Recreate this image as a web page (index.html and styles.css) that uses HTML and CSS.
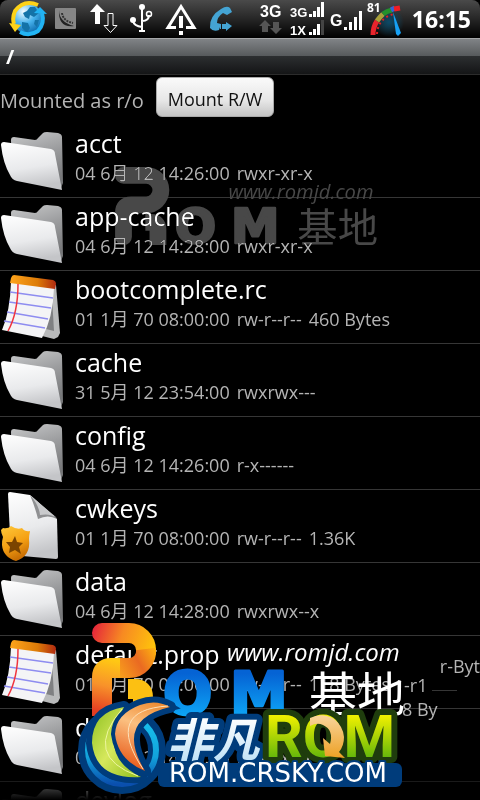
FILE: index.html
```html
<!DOCTYPE html>
<html lang="zh">

<head>
    <meta charset="UTF-8">
    <meta name="viewport" content="width=device-width, initial-scale=1.0">
    <title>/</title>
    <link rel="stylesheet" href="styles.css">
</head>

<body>
    <!-- icons used by the list rows -->
    <svg class="defs" width="0" height="0">
        <defs>
            <linearGradient id="front" x1="0" y1="0" x2="0.2" y2="1">
                <stop offset="0" stop-color="#fff"/>
                <stop offset="0.6" stop-color="#e9eaec"/>
                <stop offset="1" stop-color="#c4c5c8"/>
            </linearGradient>
            <linearGradient id="back" x1="0" y1="0" x2="0.3" y2="1">
                <stop offset="0" stop-color="#c9cacb"/>
                <stop offset="0.5" stop-color="#9c9d9f"/>
                <stop offset="1" stop-color="#77787a"/>
            </linearGradient>
            <linearGradient id="binding" x1="0" y1="0" x2="1" y2="0">
                <stop offset="0" stop-color="#ffa51c"/>
                <stop offset="0.6" stop-color="#dc7b08"/>
                <stop offset="1" stop-color="#b02a10"/>
            </linearGradient>
            <linearGradient id="gold" x1="0" y1="0" x2="0.4" y2="1">
                <stop offset="0" stop-color="#ffc93a"/>
                <stop offset="0.6" stop-color="#f5a013"/>
                <stop offset="1" stop-color="#c96f04"/>
            </linearGradient>
            <linearGradient id="ribbon" gradientUnits="userSpaceOnUse" x1="0" y1="10" x2="62" y2="30">
                <stop offset="0" stop-color="#e5283a"/>
                <stop offset="0.45" stop-color="#f78a22"/>
                <stop offset="1" stop-color="#ffc60a"/>
            </linearGradient>
            <linearGradient id="fold" gradientUnits="userSpaceOnUse" x1="62" y1="25" x2="18" y2="50">
                <stop offset="0" stop-color="#fdb010"/>
                <stop offset="0.4" stop-color="#ea6a22"/>
                <stop offset="1" stop-color="#fcae1a"/>
            </linearGradient>
            <linearGradient id="stem" gradientUnits="userSpaceOnUse" x1="16" y1="36" x2="4" y2="88">
                <stop offset="0" stop-color="#ffc814"/>
                <stop offset="0.5" stop-color="#f8922a"/>
                <stop offset="1" stop-color="#e43d22"/>
            </linearGradient>
            <linearGradient id="sky" x1="0" y1="0" x2="0" y2="1">
                <stop offset="0.2" stop-color="#0563d4"/>
                <stop offset="1" stop-color="#10b8ff"/>
            </linearGradient>
            <linearGradient id="ice" x1="0" y1="0" x2="0" y2="1">
                <stop offset="0.2" stop-color="#fff"/>
                <stop offset="1" stop-color="#b5ddf5"/>
            </linearGradient>
            <linearGradient id="lime" x1="0" y1="0" x2="0" y2="1">
                <stop offset="0.2" stop-color="#f0f000"/>
                <stop offset="0.9" stop-color="#4fae0c"/>
            </linearGradient>
            <linearGradient id="leaf" x1="0" y1="0" x2="1" y2="1">
                <stop offset="0" stop-color="#8cc020"/>
                <stop offset="0.5" stop-color="#d6e85c"/>
                <stop offset="1" stop-color="#8fbe1c"/>
            </linearGradient>
            <linearGradient id="amber" x1="0.8" y1="0" x2="0.5" y2="1">
                <stop offset="0" stop-color="#ee8a30"/>
                <stop offset="0.4" stop-color="#fbc080"/>
                <stop offset="1" stop-color="#e85c1c"/>
            </linearGradient>
            <linearGradient id="peach" x1="0" y1="0" x2="0" y2="1">
                <stop offset="0" stop-color="#f9d59c"/>
                <stop offset="1" stop-color="#eda024"/>
            </linearGradient>
            <linearGradient id="ring" x1="0" y1="0" x2="0" y2="1">
                <stop offset="0" stop-color="#19c4ee"/>
                <stop offset="0.6" stop-color="#12a3dc"/>
                <stop offset="1" stop-color="#0a4fae"/>
            </linearGradient>
            <radialGradient id="earth" cx="0.35" cy="0.25" r="0.8">
                <stop offset="0" stop-color="#f4fbff"/>
                <stop offset="0.5" stop-color="#49b4ee"/>
                <stop offset="1" stop-color="#0564a8"/>
            </radialGradient>
            <radialGradient id="glow">
                <stop offset="0" stop-color="#0c4a68"/>
                <stop offset="1" stop-color="#0c4a68" stop-opacity="0"/>
            </radialGradient>
        </defs>
        <symbol id="folder" viewBox="0 0 64 72">
            <path fill="url(#back)" d="M11 15q0-3 3-3l21 3q2 0 3-2l5-5q1-1 4-1l11 1q4 1 4 4l1 46-2 5L12 50z"/>
            <path fill="url(#front)" d="M1 20q0-3 3-3l47 7q4 1 4 5l7 36-45-9q-5-1-7-6Q3 38 1 20z"/>
        </symbol>
        <symbol id="note" viewBox="0 0 64 72">
            <path fill="#b9babb" d="M53 14l3 0 4 48-2 4-4 2-12-3z"/>
            <path fill="#7f8082" d="M52 26l2 34-8-2z"/>
            <path fill="#f4f4f6" d="M11 11l43 6q-1 30-12 50L2 59q8-18 9-48z"/>
            <path fill="url(#binding)" d="M14 4l39 5q3 1 3 4l-1 5-45-6 1-5q1-3 3-3z"/>
            <path fill="none" stroke="#8e8cf0" stroke-width="1.5" d="M10 21l43 6M9 31l42 6M7 41l41 7M4 50l41 7"/>
            <path fill="none" stroke="#f0343e" stroke-width="1.5" d="M18 13q0 29-10 47"/>
        </symbol>
        <symbol id="page" viewBox="0 0 64 72">
            <path fill="url(#front)" d="M8 4q0-2 2-2l20 3 27 24 1 38q0 2-2 2l-45-4z"/>
            <path fill="#8f9092" d="M30 5q5 12 8 24 10-5 19 0z"/>
            <path fill="#c9cacc" d="M30 5q9 10 10 20 10-2 17 3z"/>
            <path fill="url(#gold)" d="M3 38q5 1 8-2 6 4 11 2 3 4 8 3-1 5-1 8 2 17-13 22-13-4-14-16 0-5 1-8-2-4-2-7z"/>
            <path fill="#7b4400" d="M15 46l2 6 6 1-4 4 2 7-6-4-6 3 1-6-4-5 6 0z"/>
        </symbol>
    </svg>

    <header class="status">
        <svg class="globe" viewBox="0 0 40 38">
            <circle cx="20" cy="19" r="15" fill="url(#earth)"/>
            <path fill="#1473a8" d="M22 7l5 0 4 6-5 4-4-2-1 4-4-2-2-4 4-2zM14 22l6 1 2 5-3 5-5-5zM27 20l4 0-2 7-3-3z"/>
            <path fill="none" stroke="#fdd319" stroke-width="4" d="M30 5Q16-1 7 11q-3 7-1 13"/>
            <path fill="#fdd319" d="M1 23l12 2-6 7z"/>
            <path fill="none" stroke="#22b4f4" stroke-width="4" d="M12 32q9 5 18-1 7-8 4-18"/>
            <path fill="#22b4f4" d="M26 13l6-6 7 7z"/>
        </svg>
        <svg class="square" viewBox="0 0 24 38">
            <rect x="1" y="8" width="21" height="21" rx="1" fill="#868686"/>
            <path fill="#222" d="M5 10q0 12 15 16-16 2-15-16z"/>
            <path fill="none" stroke="#333" stroke-width="2" stroke-dasharray="2 1" d="M8 13q1 8 11 10"/>
        </svg>
        <svg class="wide" viewBox="0 0 38 38">
            <path fill="#fff" d="M13 4l8 8h-5v12h-5V12H6z"/>
            <path fill="none" stroke="#fff" d="M24 13.500h5v12h4l-6.500 7-6.500-7h4z"/>
        </svg>
        <svg class="usb" viewBox="0 0 28 38">
            <path fill="none" stroke="#fff" stroke-width="2" d="M14 6v25M5 21q1 5 9 6M14 21q7 0 7-6M11 31h6"/>
            <circle cx="14" cy="7" r="3" fill="#fff"/>
            <circle cx="5" cy="20" r="3" fill="#fff"/>
            <circle cx="21" cy="14" r="2.500" fill="none" stroke="#fff" stroke-width="1.500"/>
        </svg>
        <svg class="wide" viewBox="0 0 38 38">
            <path fill="none" stroke="#fff" stroke-width="3" d="M14 27.500H6l13-21 13 21h-8"/>
            <path fill="#fff" d="M17 16h4v12h-4zM17 31h4v4h-4z"/>
        </svg>
        <svg class="usb" viewBox="0 0 28 38">
            <path fill="#44a4d4" d="M15 9q6-4 9-1l2 4-5 3-4-2q-6 4-6 10l4 1-2 6q-6 2-9-2-1-12 11-19z"/>
            <path fill="#44a4d4" d="M14 24h1v5h-1zM16 24h4v-2l6 4-6 5v-2h-4z"/>
        </svg>

        <div class="status-right">
            <svg class="data" viewBox="0 0 26 38">
                <text class="net" x="2" y="17">3G</text>
                <path fill="#555" d="M7 20l6 6h-3v6H4v-6H1zM18 34l6-6h-3v-6h-6v6h-3z"/>
            </svg>
            <svg class="dual" viewBox="0 0 36 38">
                <text class="net small" x="1" y="17">3G</text>
                <text class="net small" x="1" y="35">1X</text>
                <path fill="#fff" d="M20 14h3v3h-3zM24 11h3v6h-3zM28 7h3v10h-3zM32 2h3v15h-3zM20 32h3v3h-3zM24 29h3v6h-3zM28 24h3v11h-3z"/>
                <path fill="#444" d="M32 20h3v15h-3z"/>
            </svg>
            <svg class="signal" viewBox="0 0 32 38">
                <text class="net" x="0" y="26">G</text>
                <path fill="#fff" d="M14 27h3v3h-3zM19 22h3v8h-3zM24 17h3v13h-3zM29 11h3v19h-3z"/>
            </svg>
            <svg class="gauge" viewBox="0 0 40 38">
                <circle cx="22" cy="22" r="15" fill="url(#glow)"/>
                <g fill="none" stroke-width="5">
                    <path stroke="#e8242c" d="M6 35q0-8 4-14"/>
                    <path stroke="#a9a03a" d="M10 21q2-3 6-7"/>
                    <path stroke="#23912c" d="M16 14q4-3 9-4"/>
                    <path stroke="#3366d6" d="M24 10l4-2"/>
                    <path stroke="#f01c24" d="M27 9l6-1"/>
                    <path stroke="#e02020" stroke-width="2" stroke-dasharray="2 3" d="M10 34q1-16 17-20"/>
                </g>
                <path fill="#16a0f4" d="M26 12l8 21-3 3-2-2z"/>
                <text class="percent" x="0" y="12">81</text>
            </svg>
            <span class="clock">16:15</span>
        </div>
    </header>

    <h1 class="path">/</h1>

    <div class="mount">
        <span>Mounted as r/o</span>
        <button type="button">Mount R/W</button>
    </div>

    <ul class="files">
        <li>
            <svg><use href="#folder"/></svg>
            <div><b>acct</b><p><span>04 6月 12 14:26:00</span><span>rwxr-xr-x</span></p></div>
        </li>
        <li>
            <svg><use href="#folder"/></svg>
            <div><b>app-cache</b><p><span>04 6月 12 14:28:00</span><span>rwxr-xr-x</span></p></div>
        </li>
        <li>
            <svg><use href="#note"/></svg>
            <div><b>bootcomplete.rc</b><p><span>01 1月 70 08:00:00</span><span>rw-r--r--</span><span>460 Bytes</span></p></div>
        </li>
        <li>
            <svg><use href="#folder"/></svg>
            <div><b>cache</b><p><span>31 5月 12 23:54:00</span><span>rwxrwx---</span></p></div>
        </li>
        <li>
            <svg><use href="#folder"/></svg>
            <div><b>config</b><p><span>04 6月 12 14:26:00</span><span>r-x------</span></p></div>
        </li>
        <li>
            <svg><use href="#page"/></svg>
            <div><b>cwkeys</b><p><span>01 1月 70 08:00:00</span><span>rw-r--r--</span><span>1.36K</span></p></div>
        </li>
        <li>
            <svg><use href="#folder"/></svg>
            <div><b>data</b><p><span>04 6月 12 14:28:00</span><span>rwxrwx--x</span></p></div>
        </li>
        <li>
            <svg><use href="#note"/></svg>
            <div><b>default.prop</b><p><span>01 1月 70 08:00:00</span><span>rw-r--r--</span><span>118 Bytes</span></p></div>
        </li>
        <li>
            <svg><use href="#folder"/></svg>
            <div><b>dev</b><p><span>04 6月 12 14:28:00</span><span>rwxr-xr-x</span></p></div>
        </li>
        <li>
            <svg><use href="#folder"/></svg>
            <div><b>devlog</b></div>
        </li>
    </ul>

    <span class="scrap scrap-byt">r-Byt</span>
    <span class="scrap scrap-r">-r1</span>
    <span class="scrap scrap-by">8 By</span>

    <!-- romjd stamp, grey and coloured -->
    <svg class="stamp stamp-grey" viewBox="0 0 320 100">
        <g class="ribbon">
            <path d="M10 10H37a17 17 0 0 1 0 35H19q-9 0-9 9V83" stroke-linecap="round"/>
            <path d="M36 66h7q8 0 8 8V93"/>
        </g>
        <text class="big" x="71" y="91">O</text>
        <text class="big" x="138" y="91">M</text>
        <text class="site" x="135" y="38">www.romjd.com</text>
        <text class="base" x="217" y="89">基地</text>
    </svg>
    <svg class="stamp stamp-color" viewBox="0 0 320 100">
        <g class="ribbon">
            <path stroke="#fcc012" d="M36 66h7q8 0 8 8V93"/>
            <path stroke="url(#ribbon)" stroke-linecap="round" d="M10 10H37a17 17 0 0 1 17 17"/>
            <path stroke="url(#fold)" d="M54 26a17 17 0 0 1-17 19H19"/>
            <path stroke="url(#stem)" d="M28 45H19q-9 0-9 9V93"/>
        </g>
        <text class="big" x="71" y="91">O</text>
        <text class="big" x="138" y="91">M</text>
        <text class="site" x="135" y="38">www.romjd.com</text>
        <text class="base" x="217" y="89">基地</text>
    </svg>

    <!-- crsky stamp -->
    <svg class="crsky" viewBox="0 0 330 110">
        <rect x="82" y="73" width="244" height="24" rx="6" fill="#003c7b"/>
        <text class="fan" x="91" y="67">非凡</text>
        <text class="rom" x="189" y="67">ROM</text>
        <path fill="url(#peach)" d="M234 28q12-6 24 1 9 7 10 18 0 9-5 15l6 6-20-2-2-18 7 6q4-14-7-19-6-3-13 1z"/>
        <text class="host" x="93" y="92">ROM.CRSKY.COM</text>
        <g fill="none">
            <circle cx="46" cy="60" r="35" stroke="#003c7b" stroke-width="18"/>
            <circle cx="46" cy="60" r="34" stroke="url(#ring)" stroke-width="6"/>
        </g>
        <g stroke="#003c7b" stroke-width="12" stroke-linejoin="round">
            <path id="moon-left" fill="#003c7b" d="M48 17Q16 22 16 53q4 37 49 34Q21 66 48 17z"/>
            <path id="moon-right" fill="#003c7b" d="M94 17Q80 9 64 15 40 24 39 44q3 26 30 37Q38 30 94 17z"/>
        </g>
        <path fill="url(#leaf)" d="M48 17Q16 22 16 53q4 37 49 34Q21 66 48 17z"/>
        <path fill="none" stroke="#eef6a0" d="M46 19Q6 66 62 86"/>
        <path fill="url(#amber)" stroke="#003c7b" stroke-width="8" paint-order="stroke" d="M94 17Q80 9 64 15 40 24 39 44q3 26 30 37Q38 30 94 17z"/>
        <path fill="none" stroke="#fde0b8" d="M92 16Q28 20 67 79"/>
    </svg>
</body>

</html>
```

FILE: styles.css
```css
* {
    box-sizing: border-box;
}

body {
    position: relative;
    display: flex;
    flex-direction: column;
    height: 100vh;
    margin: 0;
    overflow: hidden;
    background: #000;
    color: #fff;
    font-family: "Open Sans", "Noto Sans CJK SC", sans-serif;
}

svg {
    display: block;
    flex: none;
    overflow: visible;
}

.defs {
    position: absolute;
}

/* status bar */
.status {
    display: flex;
    flex: none;
    gap: 6px;
    height: 38px;
    padding: 0 9px 0 8px;
    background: linear-gradient(#4a4a4a, #262626 50%, #000);
    border-top-left-radius: 8px;
    border-top-right-radius: 8px;
}

.status svg {
    height: 38px;
}

.status-right {
    display: flex;
    gap: 5px;
    margin-left: auto;
}

.globe,
.gauge {
    width: 40px;
}

.square {
    width: 24px;
}

.wide {
    width: 38px;
}

.usb {
    width: 28px;
}

.data {
    width: 26px;
}

.dual {
    width: 36px;
}

.signal {
    width: 32px;
}

.net {
    fill: #fff;
    font: bold 16px "Liberation Sans", sans-serif;
}

.net.small {
    font-size: 13px;
}

.percent {
    fill: #fff;
    font: bold 12px "Open Sans", sans-serif;
}

.clock {
    font-size: 23px;
    font-weight: bold;
    line-height: 38px;
}

.path {
    flex: none;
    height: 37px;
    margin: 0;
    padding: 0 6px;
    border-top: 1px solid #a4a6a8;
    border-bottom: 1px solid #2c2c2c;
    background: linear-gradient(#808386, #56595b 50%, #2c2e30 50%, #141516);
    font-size: 20px;
    line-height: 36px;
}

.mount {
    display: flex;
    flex: none;
    align-items: flex-start;
    gap: 12px;
    height: 50px;
    padding-top: 2px;
    color: #b4b4b4;
    font-size: 20px;
    line-height: 48px;
}

.mount button {
    height: 40px;
    padding: 4px 11px 0;
    border: 1px solid #aaa;
    border-radius: 6px;
    background: linear-gradient(#fafafa, #e6e6e6 60%, #c4c4c4);
    color: #111;
    font: 18px "Open Sans", sans-serif;
}

/* file list */
.files {
    position: relative;
    flex: 1;
    min-height: 0;
    margin: 0;
    padding: 0;
    overflow: hidden;
    list-style: none;
}

.files::after {
    content: "";
    position: absolute;
    right: 0;
    bottom: 0;
    left: 0;
    height: 19px;
    background: linear-gradient(rgba(0, 0, 0, 0.5), #000);
}

.files li {
    display: flex;
    gap: 11px;
    height: 73px;
    border-bottom: 1px solid #363636;
}

.files svg {
    width: 64px;
    height: 72px;
}

.files b {
    display: block;
    padding-top: 2px;
    font-size: 25px;
    font-weight: normal;
    line-height: 32px;
}

.files p {
    display: flex;
    gap: 7px;
    margin: 0;
    color: #b4b4b4;
    font-size: 18px;
    line-height: 28px;
    white-space: nowrap;
}

/* leftovers of row text at the right edge */
.scrap {
    position: absolute;
    color: #b4b4b4;
    font-size: 18px;
    line-height: 24px;
}

.scrap-byt {
    top: 654px;
    right: 0;
}

.scrap-r {
    top: 673px;
    left: 404px;
}

.scrap-r::after {
    content: "";
    position: absolute;
    top: 17px;
    left: 28px;
    width: 25px;
    border-top: 1px solid #363636;
}

.scrap-by {
    top: 697px;
    left: 402px;
}

/* stamps over the list */
.stamp {
    position: absolute;
    fill: #fff;
}

.stamp-grey {
    top: 167px;
    left: 115px;
    width: 269px;
    height: 84px;
    mix-blend-mode: lighten;
    fill: #484848;
}

.stamp-grey .ribbon {
    stroke: #484848;
}

.stamp-color {
    top: 623px;
    left: 92px;
    width: 320px;
    height: 100px;
}

.ribbon {
    fill: none;
    stroke-width: 20px;
}

.big {
    stroke: #484848;
    stroke-width: 3px;
    stroke-linejoin: round;
    font: bold 58px "DejaVu Sans", sans-serif;
}

.stamp-color .big {
    fill: url(#sky);
    stroke: url(#sky);
}

.site {
    font: italic 24px "Open Sans", sans-serif;
}

.base {
    font: 48px "Noto Sans CJK SC", sans-serif;
}

.crsky {
    position: absolute;
    top: 690px;
    left: 76px;
    width: 330px;
    height: 110px;
}

.crsky text {
    paint-order: stroke;
    stroke: #003c7b;
    stroke-width: 12px;
    stroke-linejoin: round;
}

.crsky .fan {
    fill: url(#ice);
    font: italic bold 46px "Noto Sans CJK SC", sans-serif;
}

.crsky .rom {
    fill: url(#lime);
    stroke: #1f3d0d;
    font: bold 59px Roboto, sans-serif;
}

.crsky .host {
    fill: #fff;
    stroke-width: 4px;
    font: 26px "DejaVu Sans", sans-serif;
}
```
